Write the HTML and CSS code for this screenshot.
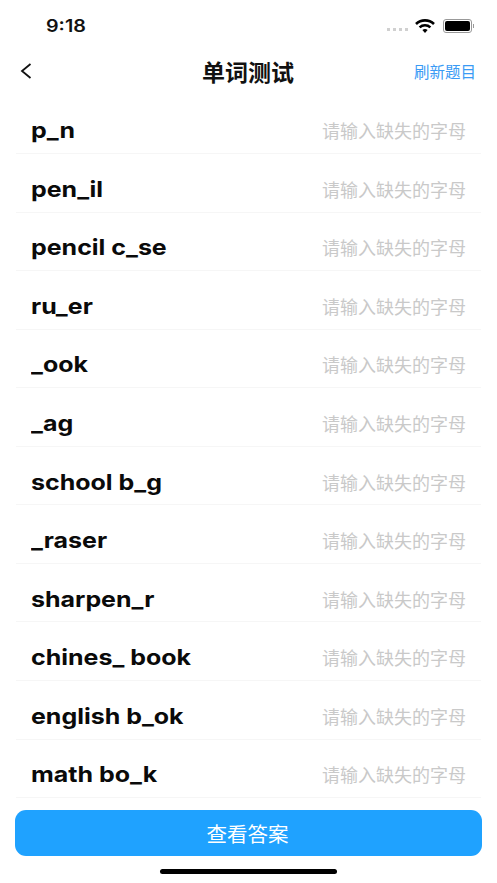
FILE: index.html
```html
<!DOCTYPE html>
<html lang="zh">
<head>
  <meta charset="UTF-8" />
  <title>单词测试</title>
  <link rel="stylesheet" href="styles.css">
</head>
<body>
  <div class="page">
    <!-- 状态栏 -->
    <div class="status-bar">
      <span class="time">9:18</span>
      <div class="status-icons">
        <div class="signal"><i></i><i></i><i></i><i></i></div>
        <svg class="wifi" width="20" height="14" viewBox="0 0 20 14">
          <path d="M1 5 A13 13 0 0 1 19 5" fill="none" stroke="#000" stroke-width="2.6"/>
          <path d="M4.6 8.4 A8 8 0 0 1 15.4 8.4" fill="none" stroke="#000" stroke-width="2.6"/>
          <path d="M7.4 11 L10 14 L12.6 11 A4 4 0 0 0 7.4 11 Z" fill="#000"/>
        </svg>
        <div class="battery"><div class="battery-level"></div></div>
        <div class="battery-cap"></div>
      </div>
    </div>

    <!-- 导航栏 -->
    <div class="nav-bar">
      <svg class="back" width="12" height="16" viewBox="0 0 12 16">
        <path d="M10.5 1 L2 8 L10.5 15" fill="none" stroke="#111" stroke-width="1.8"/>
      </svg>
      <div class="nav-title">单词测试</div>
      <div class="nav-action">刷新题目</div>
    </div>

    <!-- 题目列表 -->
    <div class="word-list">
      <div class="word-row"><span class="word">p_n</span><span class="hint">请输入缺失的字母</span></div>
      <div class="word-row"><span class="word">pen_il</span><span class="hint">请输入缺失的字母</span></div>
      <div class="word-row"><span class="word">pencil c_se</span><span class="hint">请输入缺失的字母</span></div>
      <div class="word-row"><span class="word">ru_er</span><span class="hint">请输入缺失的字母</span></div>
      <div class="word-row"><span class="word">_ook</span><span class="hint">请输入缺失的字母</span></div>
      <div class="word-row"><span class="word">_ag</span><span class="hint">请输入缺失的字母</span></div>
      <div class="word-row"><span class="word">school b_g</span><span class="hint">请输入缺失的字母</span></div>
      <div class="word-row"><span class="word">_raser</span><span class="hint">请输入缺失的字母</span></div>
      <div class="word-row"><span class="word">sharpen_r</span><span class="hint">请输入缺失的字母</span></div>
      <div class="word-row"><span class="word">chines_ book</span><span class="hint">请输入缺失的字母</span></div>
      <div class="word-row"><span class="word">english b_ok</span><span class="hint">请输入缺失的字母</span></div>
      <div class="word-row"><span class="word">math bo_k</span><span class="hint">请输入缺失的字母</span></div>
    </div>

    <div class="answer-btn">查看答案</div>
    <div class="home-bar"></div>
  </div>
</body>
</html>
```

FILE: styles.css
```css
html, body {
  margin: 0; padding: 0;
  width: 100%; height: 100%;
  background: #fff;
  font-family: "Inter", "Noto Sans CJK SC", sans-serif;
}

.page {
  width: 497px; height: 883px;
  display: flex; flex-direction: column;
  overflow: hidden;
}

/* 状态栏 */
.status-bar {
  height: 51px;
  padding: 0 23px 0 46px;
  display: flex; align-items: center;
  justify-content: space-between;
}
.time {
  font-size: 17px;
  font-weight: 600;
  color: #111;
  display: inline-block;
  transform: scaleX(1.16);
  transform-origin: left center;
}
.status-icons {
  display: flex; align-items: center;
}
.signal {
  display: flex; gap: 3px;
  margin: 8px 7px 0 0;
}
.signal i {
  width: 3px; height: 3px;
  background: #d0d0d0;
}
.wifi {
  margin-right: 8px;
}
.battery {
  width: 25px; height: 10px;
  border: 1px solid #999;
  border-radius: 3px;
  padding: 1px;
}
.battery-level {
  height: 100%;
  background: #000;
  border-radius: 2px;
}
.battery-cap {
  width: 1px; height: 4px;
  margin-left: 1px;
  background: #999;
}

/* 导航栏 */
.nav-bar {
  height: 42px;
  padding: 0 21px 3px 20px;
  box-sizing: border-box;
  display: grid;
  grid-template-columns: 1fr auto 1fr;
  align-items: center;
}
.nav-title {
  font-size: 23px;
  font-weight: 600;
  color: #111;
}
.nav-action {
  justify-self: end;
  font-size: 15.5px;
  color: #3a9bf5;
}

/* 题目列表 */
.word-list {
  margin-top: 2.5px;
  padding: 0 16px;
}
.word-row {
  height: 58.55px;
  box-sizing: border-box;
  padding: 12px 15px 0;
  display: flex; align-items: center;
  justify-content: space-between;
  border-bottom: 1px solid #f6f6f6;
}
.word {
  font-size: 22px;
  font-weight: 700;
  color: #0a0a0a;
  display: inline-block;
  transform: scaleX(1.135);
  transform-origin: left center;
}
.hint {
  font-size: 18px;
  color: #c9c9c9;
  white-space: nowrap;
}

/* 底部按钮 */
.answer-btn {
  margin: 12px 15px 0;
  height: 46px;
  background: #1fa2ff;
  border-radius: 11px;
  color: #fff;
  font-size: 20.5px;
  padding-right: 2px;
  display: flex; align-items: center; justify-content: center;
}
.home-bar {
  width: 177px; height: 5px;
  margin: 13px auto 0;
  border-radius: 3px;
  background: #000;
}
```
